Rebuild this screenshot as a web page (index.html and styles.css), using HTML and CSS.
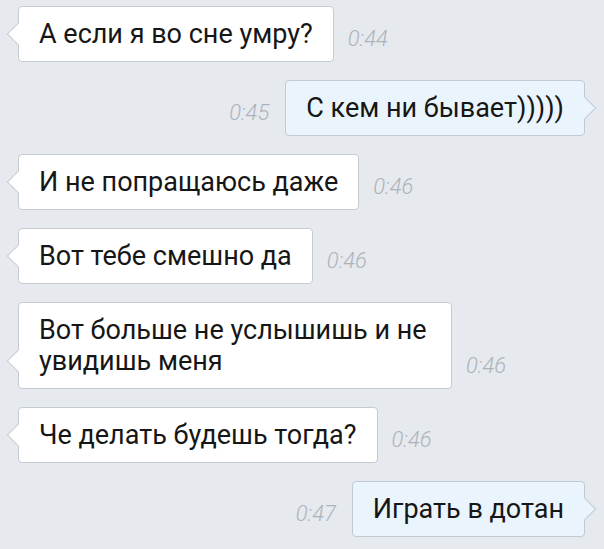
FILE: index.html
```html
<!DOCTYPE html>
<html lang="ru">
<head>
    <meta charset="UTF-8">
    <meta name="viewport" content="width=device-width, initial-scale=1.0">
    <title>Диалог</title>
    <link rel="stylesheet" href="styles.css">
</head>
<body>
    <div class="chat">
        <div class="msg in">
            <div class="bubble">А если я во сне умру?</div>
            <span class="time">0:44</span>
        </div>
        <div class="msg out">
            <span class="time">0:45</span>
            <div class="bubble">С кем ни бывает)))))</div>
        </div>
        <div class="msg in">
            <div class="bubble">И не попращаюсь даже</div>
            <span class="time">0:46</span>
        </div>
        <div class="msg in">
            <div class="bubble">Вот тебе смешно да</div>
            <span class="time">0:46</span>
        </div>
        <div class="msg in">
            <div class="bubble">Вот больше не услышишь и не увидишь меня</div>
            <span class="time">0:46</span>
        </div>
        <div class="msg in">
            <div class="bubble">Че делать будешь тогда?</div>
            <span class="time">0:46</span>
        </div>
        <div class="msg out">
            <span class="time">0:47</span>
            <div class="bubble">Играть в дотан</div>
        </div>
    </div>
</body>
</html>
```

FILE: styles.css
```css
body {
    margin: 0;
    background-color: #e6e9ee;
    font-family: Roboto, "Noto Sans", sans-serif;
}
.chat {
    display: flex;
    flex-direction: column;
    gap: 18px;
    padding: 6px 19px 0 18px;
}
.msg {
    display: flex;
    align-items: flex-end;
    gap: 14px;
}
.msg.out {
    justify-content: flex-end;
    gap: 16px;
}
.bubble {
    position: relative;
    max-width: 434px;
    box-sizing: border-box;
    padding: 12px 20px 11px;
    font-size: 27px;
    line-height: 31px;
    color: #161616;
    background-color: #fff;
    border: 1px solid #c6cbd2;
    border-radius: 4px;
}
.bubble::before {
    content: "";
    position: absolute;
    bottom: 19px;
    left: -9px;
    width: 15px;
    height: 15px;
    background-color: inherit;
    border-left: 1px solid #c6cbd2;
    border-bottom: 1px solid #c6cbd2;
    transform: rotate(45deg);
}
.out .bubble {
    background-color: #eaf4fc;
    border-color: #bfcad5;
}
.out .bubble::before {
    left: auto;
    right: -9px;
    border: none;
    border-right: 1px solid #bfcad5;
    border-top: 1px solid #bfcad5;
}
.time {
    margin-bottom: 11px;
    font-size: 22px;
    line-height: 24px;
    font-style: italic;
    font-weight: 300;
    color: #aeb3ba;
}
```
